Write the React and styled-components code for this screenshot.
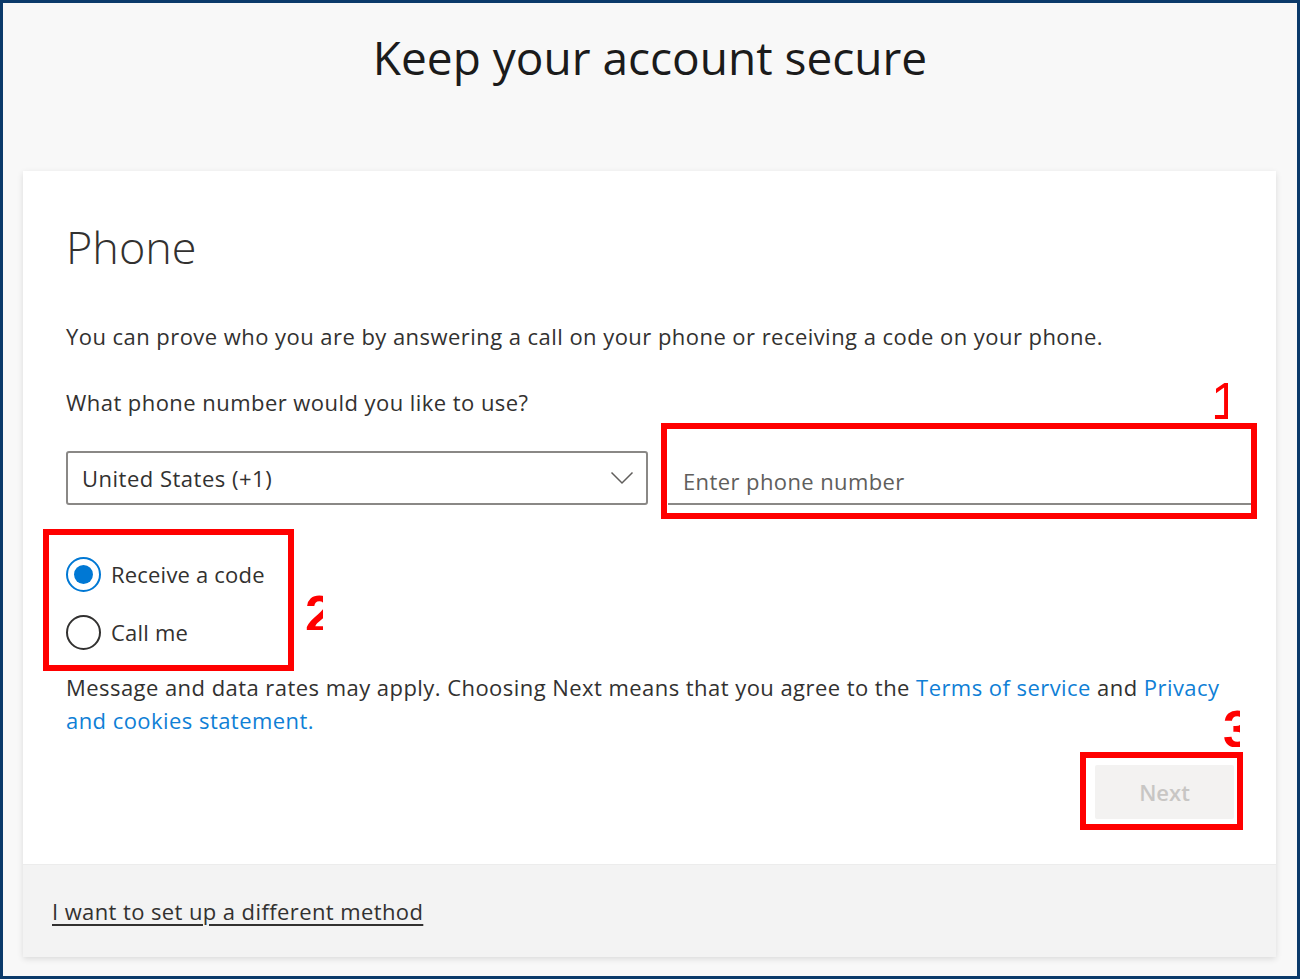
import React from "react";
import styled, { createGlobalStyle } from "styled-components";

const GlobalStyle = createGlobalStyle`
  html, body {
    margin: 0;
    padding: 0;
    background: #ffffff;
  }
  * {
    box-sizing: border-box;
  }
`;

const Frame = styled.div`
  position: relative;
  width: 1300px;
  height: 979px;
  border: 3px solid #0b3a6a;
  background: #f8f8f8;
  font-family: "Segoe UI", "Open Sans", "Noto Sans", sans-serif;
  color: #323130;
  display: flex;
  flex-direction: column;
  overflow: hidden;
`;

const Header = styled.header`
  height: 168px;
  display: flex;
  justify-content: center;
  padding-top: 22px;
`;

const Title = styled.h1`
  margin: 0;
  font-size: 46px;
  font-weight: 400;
  line-height: 64px;
  color: #1b1b1b;
`;

const Card = styled.section`
  margin: 0 21px 0 20px;
  background: #ffffff;
  box-shadow: 0 2px 6px rgba(0, 0, 0, 0.12);
  display: flex;
  flex-direction: column;
`;

const CardBody = styled.div`
  padding: 44px 25px 45px 43px;
  display: flex;
  flex-direction: column;
`;

const Heading = styled.h2`
  margin: 0;
  font-size: 45px;
  font-weight: 300;
  line-height: 64px;
  color: #323130;
`;

const Text = styled.p`
  margin: ${(p) => p.$mt || 0}px 0 0;
  font-size: 22px;
  letter-spacing: 0.45px;
  line-height: 33px;
  color: #323130;
`;

const PhoneRow = styled.div`
  margin-top: 32px;
  display: flex;
  gap: 20px;
  align-items: flex-end;
`;

const Select = styled.div`
  width: 582px;
  height: 54px;
  border: 2px solid #8a8886;
  border-radius: 3px;
  display: flex;
  align-items: center;
  justify-content: space-between;
  padding: 0 12px 0 14px;
  font-size: 22px;
  letter-spacing: 0.5px;
  color: #323130;
`;

const PhoneInput = styled.input`
  flex: 1;
  height: 54px;
  border: none;
  border-bottom: 2px solid #8a8886;
  outline: none;
  background: transparent;
  font-family: inherit;
  font-size: 22px;
  letter-spacing: 0.4px;
  padding: 8px 15px 0;
  color: #323130;
  &::placeholder {
    color: #605e5c;
  }
`;

const RadioGroup = styled.div`
  margin-top: 52px;
  display: flex;
  flex-direction: column;
  gap: 23px;
`;

const RadioRow = styled.label`
  display: flex;
  align-items: center;
  gap: 10px;
  font-size: 22px;
  letter-spacing: 0.2px;
  line-height: 35px;
  color: #323130;
`;

const RadioCircle = styled.span`
  width: 35px;
  height: 35px;
  border-radius: 50%;
  border: 2px solid ${(p) => (p.$checked ? "#0078d4" : "#323130")};
  display: flex;
  align-items: center;
  justify-content: center;
  &::after {
    content: "";
    width: 19px;
    height: 19px;
    border-radius: 50%;
    background: ${(p) => (p.$checked ? "#0078d4" : "transparent")};
  }
`;

const Link = styled.a`
  color: #0f7fd6;
  text-decoration: none;
`;

const Actions = styled.div`
  margin-top: 28px;
  padding-right: 17px;
  display: flex;
  justify-content: flex-end;
`;

const NextButton = styled.button`
  width: 139px;
  height: 54px;
  border: none;
  border-radius: 2px;
  background: #f3f2f1;
  color: #c8c6c4;
  font-family: inherit;
  font-size: 22px;
  font-weight: 600;
`;

const Footer = styled.footer`
  height: 93px;
  background: #f3f3f3;
  border-top: 1px solid #ececec;
  display: flex;
  align-items: center;
  padding-left: 29px;
`;

const FooterLink = styled.a`
  font-size: 22px;
  letter-spacing: 0.4px;
  color: #323130;
  text-decoration: underline;
  text-underline-offset: 4px;
`;

const Box = styled.div`
  position: absolute;
  border: 6px solid #ff0000;
  pointer-events: none;
`;

const Mark = styled.span`
  position: absolute;
  color: #ff0000;
  font-family: "Liberation Sans", Arial, sans-serif;
  font-weight: ${(p) => (p.$thin ? 400 : 700)};
  font-size: 52px;
  line-height: 52px;
  overflow: hidden;
  pointer-events: none;
`;

export default function App() {
  return (
    <>
      <GlobalStyle />
      <Frame>
        <Header>
          <Title>Keep your account secure</Title>
        </Header>
        <Card>
          <CardBody>
            <Heading>Phone</Heading>
            <Text $mt={41}>
              You can prove who you are by answering a call on your phone or
              receiving a code on your phone.
            </Text>
            <Text $mt={33}>What phone number would you like to use?</Text>
            <PhoneRow>
              <Select>
                <span>United States (+1)</span>
                <svg width="24" height="14" viewBox="0 0 24 14" fill="none">
                  <path
                    d="M1.5 1.5 L12 12 L22.5 1.5"
                    stroke="#605e5c"
                    strokeWidth="1.5"
                  />
                </svg>
              </Select>
              <PhoneInput placeholder="Enter phone number" />
            </PhoneRow>
            <RadioGroup>
              <RadioRow>
                <RadioCircle $checked />
                Receive a code
              </RadioRow>
              <RadioRow>
                <RadioCircle />
                Call me
              </RadioRow>
            </RadioGroup>
            <Text $mt={21}>
              Message and data rates may apply. Choosing Next means that you
              agree to the <Link href="#">Terms of service</Link> and{" "}
              <Link href="#">Privacy and cookies statement.</Link>
            </Text>
            <Actions>
              <NextButton disabled>Next</NextButton>
            </Actions>
          </CardBody>
          <Footer>
            <FooterLink href="#">I want to set up a different method</FooterLink>
          </Footer>
        </Card>

        <Box style={{ left: 658, top: 420, width: 596, height: 96 }} />
        <Mark $thin style={{ left: 1208, top: 372, width: 17, height: 44 }}>
          1
        </Mark>
        <Box style={{ left: 40, top: 526, width: 251, height: 142 }} />
        <Mark style={{ left: 302, top: 585, width: 18, height: 42 }}>2</Mark>
        <Box style={{ left: 1077, top: 749, width: 163, height: 78 }} />
        <Mark style={{ left: 1220, top: 700, width: 17, height: 44 }}>3</Mark>
      </Frame>
    </>
  );
}
